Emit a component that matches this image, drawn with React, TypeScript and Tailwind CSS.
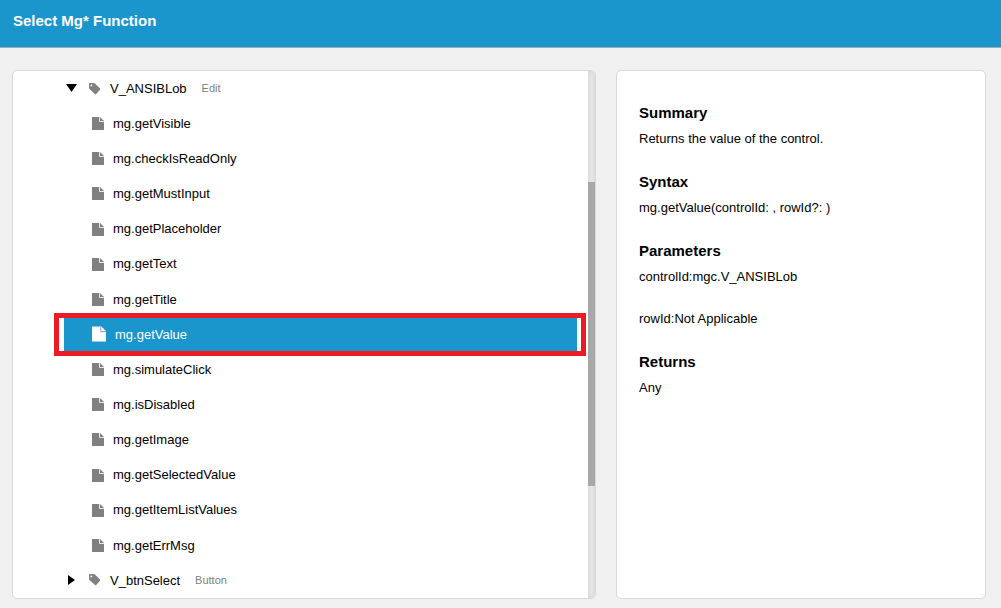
import clsx from "clsx";

const functions = [
  "mg.getVisible",
  "mg.checkIsReadOnly",
  "mg.getMustInput",
  "mg.getPlaceholder",
  "mg.getText",
  "mg.getTitle",
  "mg.getValue",
  "mg.simulateClick",
  "mg.isDisabled",
  "mg.getImage",
  "mg.getSelectedValue",
  "mg.getItemListValues",
  "mg.getErrMsg",
];

const selected = "mg.getValue";

const details = [
  { title: "Summary", lines: ["Returns the value of the control."] },
  { title: "Syntax", lines: ["mg.getValue(controlId: , rowId?: )"] },
  {
    title: "Parameters",
    lines: ["controlId:mgc.V_ANSIBLob", "rowId:Not Applicable"],
  },
  { title: "Returns", lines: ["Any"] },
];

function FileIcon({ active }: { active: boolean }) {
  return (
    <svg
      viewBox="0 0 12 13"
      className={clsx("mr-[9px]", active ? "h-4 w-[14px]" : "h-[13px] w-3")}
    >
      <path d="M0 0h8l4 4v9H0z" fill={active ? "#fff" : "#808080"} />
      <path
        d="M7.500 0v4.500H12"
        fill="none"
        stroke={active ? "#a9a4e6" : "#e8e8f4"}
        strokeWidth="1"
      />
    </svg>
  );
}

function TagIcon() {
  return (
    <svg viewBox="0 0 12 12" className="h-3 w-3">
      <path
        fill="#808080"
        fillRule="evenodd"
        d="M0 1Q0 0 1 0h4q.6 0 1 .4l5 5.200q.6.6 0 1.200L7.200 11q-.6.6-1.200 0L.5 6Q0 5.600 0 5zM2.300 1.500a.9.9 0 1 0 0 1.800a.9.9 0 0 0 0-1.800z"
      />
    </svg>
  );
}

function ControlRow({
  name,
  type,
  open,
}: {
  name: string;
  type: string;
  open?: boolean;
}) {
  return (
    <li className="flex items-center pl-[53px]">
      <button type="button" aria-expanded={!!open} className="flex items-center">
        <svg viewBox="0 0 12 10" className="h-[10px] w-3">
          {open ? <path d="M0 0h11L5.500 8z" /> : <path d="M2 0l7 5-7 5z" />}
        </svg>
        <span className="pr-[9px] pl-[11px]">
          <TagIcon />
        </span>
        <span>{name}</span>
        <span className="pl-[15px] text-[11px] text-[#808080]">{type}</span>
      </button>
    </li>
  );
}

function FunctionRow({ name }: { name: string }) {
  const active = name === selected;

  return (
    <li className="relative flex items-center pr-[11px] pl-[51px]">
      <button
        type="button"
        className={clsx(
          "flex h-[33px] w-full items-center pl-7 text-left",
          active && "bg-[#1a96cd] text-white",
        )}
      >
        <FileIcon active={active} />
        {name}
      </button>
      {/* Highlight frame */}
      {active && (
        <div className="pointer-events-none absolute -inset-y-1 right-[2px] left-[41px] border-5 border-[#ed1c24]" />
      )}
    </li>
  );
}

export default function App() {
  return (
    <div className="flex min-h-screen flex-col bg-[#f0f0f0] font-['Liberation_Sans',Arial,sans-serif] text-[13px] text-black">
      <header className="h-12 border-b border-[#a3adb3] bg-[#1a96cd] px-[13px] pt-[11px]">
        <h1 className="text-[15px] leading-5 font-bold text-white">
          Select Mg* Function
        </h1>
      </header>

      <main className="grid flex-1 grid-cols-[584fr_370fr] gap-5 pt-[22px] pr-[15px] pb-[9px] pl-3">
        <section className="flex overflow-hidden rounded-[5px] border border-[#d9d9d9] bg-white">
          <ul className="grid flex-1 auto-rows-fr">
            <ControlRow name="V_ANSIBLob" type="Edit" open />
            {functions.map((name) => (
              <FunctionRow key={name} name={name} />
            ))}
            <ControlRow name="V_btnSelect" type="Button" />
          </ul>

          {/* Scrollbar */}
          <div className="flex w-[7px] flex-col bg-[#e6e6e6] shadow-[inset_0_0_4px_#d0d0d0]">
            <div className="flex-[111]" />
            <div className="flex-[304] bg-[#a8a8a8]" />
            <div className="flex-[112]" />
          </div>
        </section>

        <section className="flex flex-col gap-[17px] rounded-[5px] border border-[#d9d9d9] bg-white px-[22px] pt-8">
          {details.map(({ title, lines }) => (
            <div key={title}>
              <h2 className="text-[15px] leading-5 font-bold">{title}</h2>
              <div className="flex flex-col gap-[10px]">
                {lines.map((line) => (
                  <p key={line} className="leading-8">
                    {line}
                  </p>
                ))}
              </div>
            </div>
          ))}
        </section>
      </main>
    </div>
  );
}
